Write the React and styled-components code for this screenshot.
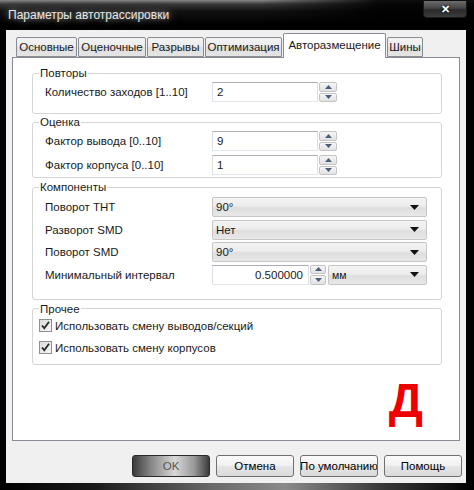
import styled, { createGlobalStyle } from 'styled-components'

const GlobalStyle = createGlobalStyle`
    html, body {
        margin: 0;
        padding: 0;
        background: #000;
    }
    body {
        font-family: "Liberation Sans", Arial, sans-serif;
        font-size: 11.5px;
        color: #1a1a1a;
    }
`

const tabs = [
    { name: 'Основные', w: 61 },
    { name: 'Оценочные', w: 68 },
    { name: 'Разрывы', w: 57 },
    { name: 'Оптимизация', w: 77 },
    { name: 'Авторазмещение', w: 103, active: true },
    { name: 'Шины', w: 36 },
]

function SpinArrows({ $w = 18 }) {
    return (
        <Spin $w={$w}>
            <SpinHalf>
                <svg width="7" height="4" viewBox="0 0 7 4"><path d="M0 4 L3.5 0 L7 4 Z" fill="#4d5d7a" /></svg>
            </SpinHalf>
            <SpinHalf>
                <svg width="7" height="4" viewBox="0 0 7 4"><path d="M0 0 L3.5 4 L7 0 Z" fill="#4d5d7a" /></svg>
            </SpinHalf>
        </Spin>
    )
}

function Combo({ value, $w = 215 }) {
    return (
        <ComboBox $w={$w}>
            <span>{value}</span>
            <svg width="9" height="5" viewBox="0 0 9 5"><path d="M0 0 L9 0 L4.5 5 Z" fill="#111" /></svg>
        </ComboBox>
    )
}

function Check({ label }) {
    return (
        <CheckRow>
            <CheckBox>
                <svg width="11" height="11" viewBox="0 0 11 11">
                    <path d="M2 5.5 L4.3 8.2 L9 1.8" stroke="#2a2a2a" strokeWidth="1.8" fill="none" />
                </svg>
            </CheckBox>
            <span>{label}</span>
        </CheckRow>
    )
}

export default function App() {
    return (
        <>
            <GlobalStyle />
            <Window>
                <TitleBar>
                    <Title>Параметры автотрассировки</Title>
                    <CloseBtn>✕</CloseBtn>
                </TitleBar>
                <Client>
                    <TabStrip>
                        {tabs.map(t => (
                            <Tab key={t.name} $w={t.w} $active={t.active}>{t.name}</Tab>
                        ))}
                    </TabStrip>
                    <Panel>
                        <Group $pb={11}>
                            <Legend>Повторы</Legend>
                            <Row $mt={2}>
                                <Label>Количество заходов [1..10]</Label>
                                <NumInput $w={106}>2</NumInput>
                                <SpinArrows />
                            </Row>
                        </Group>
                        <Group $pb={2} $mt={1}>
                            <Legend>Оценка</Legend>
                            <Rows $gap={4}>
                                <Row $mt={2}>
                                    <Label>Фактор вывода [0..10]</Label>
                                    <NumInput $w={106}>9</NumInput>
                                    <SpinArrows />
                                </Row>
                                <Row>
                                    <Label>Фактор корпуса [0..10]</Label>
                                    <NumInput $w={106}>1</NumInput>
                                    <SpinArrows />
                                </Row>
                            </Rows>
                        </Group>
                        <Group $pb={14} $mt={2}>
                            <Legend>Компоненты</Legend>
                            <Rows $gap={2.5}>
                                <Row $mt={3}>
                                    <Label>Поворот THT</Label>
                                    <Combo value="90°" />
                                </Row>
                                <Row>
                                    <Label>Разворот SMD</Label>
                                    <Combo value="Нет" />
                                </Row>
                                <Row>
                                    <Label>Поворот SMD</Label>
                                    <Combo value="90°" />
                                </Row>
                                <Row>
                                    <Label>Минимальный интервал</Label>
                                    <NumInput $w={97} $right>0.500000</NumInput>
                                    <SpinArrows $w={16} />
                                    <Combo value="мм" $w={99} />
                                </Row>
                            </Rows>
                        </Group>
                        <Group $pb={7} $mt={2}>
                            <Legend>Прочее</Legend>
                            <Rows $gap={4}>
                                <Check label="Использовать смену выводов/секций" />
                                <Check label="Использовать смену корпусов" />
                            </Rows>
                        </Group>
                        <Mark>Д</Mark>
                    </Panel>
                    <Buttons>
                        <Button $default>OK</Button>
                        <Button>Отмена</Button>
                        <Button>По умолчанию</Button>
                        <Button>Помощь</Button>
                    </Buttons>
                </Client>
                <BottomFrame />
            </Window>
        </>
    )
}

const Window = styled.div`
    width: 474px;
    height: 490px;
    display: flex;
    flex-direction: column;
    background: #000;
    overflow: hidden;
`

const TitleBar = styled.div`
    height: 30px;
    flex-shrink: 0;
    display: flex;
    justify-content: space-between;
    background:
        linear-gradient(to right, rgba(0,0,0,0) 0, rgba(0,0,0,0) 55%, rgba(0,0,0,0.9) 80%),
        linear-gradient(to bottom, #8a8a8a 0, #3a3a3a 4px, #121212 11px, #000 24px);
`

const Title = styled.div`
    padding-left: 8px;
    line-height: 30px;
    color: #e6e6e6;
    font-size: 12px;
    text-shadow: 0 0 6px rgba(170, 170, 170, 0.9), 0 0 12px rgba(120, 120, 120, 0.8);
`

const CloseBtn = styled.div`
    width: 42px;
    height: 16px;
    margin: 1px 7px 0 0;
    border: 1px solid #1a1a1a;
    border-top: none;
    border-radius: 0 0 4px 4px;
    background: linear-gradient(to bottom, #6c6c6c 0, #444 45%, #2a2a2a 55%, #3c3c3c 100%);
    color: #fff;
    font-size: 11px;
    font-weight: bold;
    display: flex;
    align-items: center;
    justify-content: center;
    text-shadow: 0 0 3px #000;
`

const Client = styled.div`
    flex: 1;
    margin: 0 8px 0 6px;
    padding: 3px 6px 6px;
    background: #f0f0f0;
    display: flex;
    flex-direction: column;
    min-height: 0;
`

const TabStrip = styled.div`
    height: 24px;
    display: flex;
    align-items: flex-end;
    gap: 1px;
    padding-left: 4px;
    position: relative;
    z-index: 1;
`

const Tab = styled.div`
    box-sizing: border-box;
    width: ${p => p.$w}px;
    height: ${p => (p.$active ? 25 : 20)}px;
    margin-bottom: ${p => (p.$active ? -1 : 0)}px;
    padding-bottom: ${p => (p.$active ? 3 : 0)}px;
    border: 1px solid #898c95;
    border-bottom: ${p => (p.$active ? 'none' : '1px solid #898c95')};
    border-radius: 2px 2px 0 0;
    background: ${p => (p.$active ? '#fff' : 'linear-gradient(to bottom, #f3f3f3 0, #ebebeb 50%, #dedede 51%, #e5e5e5 100%)')};
    display: flex;
    align-items: center;
    justify-content: center;
    white-space: nowrap;
`

const Panel = styled.div`
    height: 384px;
    box-sizing: border-box;
    background: #fff;
    border: 1px solid #898c95;
    padding: 8px 17px 0 19px;
    display: flex;
    flex-direction: column;
`

const Group = styled.fieldset`
    margin: ${p => p.$mt || 0}px 0 0;
    padding: 0 13px ${p => p.$pb}px 6px;
    border: 1px solid #d5d5d5;
    border-radius: 3px;
    min-width: 0;
`

const Legend = styled.legend`
    padding: 0 1px;
    line-height: 14px;
`

const Rows = styled.div`
    display: flex;
    flex-direction: column;
    gap: ${p => p.$gap}px;
`

const Row = styled.div`
    height: 20px;
    margin-top: ${p => p.$mt || 0}px;
    display: flex;
    align-items: center;
`

const Label = styled.div`
    flex: 0 0 173px;
    box-sizing: border-box;
    padding-left: 6px;
    white-space: nowrap;
`

const NumInput = styled.div`
    box-sizing: border-box;
    width: ${p => p.$w}px;
    height: 20px;
    padding: 0 ${p => (p.$right ? 5 : 4)}px;
    border: 1px solid #dbdfe6;
    border-top-color: #abadb3;
    border-bottom-color: #e3e9ef;
    background: #fff;
    display: flex;
    align-items: center;
    justify-content: ${p => (p.$right ? 'flex-end' : 'flex-start')};
`

const Spin = styled.div`
    width: ${p => p.$w}px;
    height: 20px;
    margin-left: 1px;
    display: flex;
    flex-direction: column;
    gap: 1px;
    margin-right: 2px;
`

const SpinHalf = styled.div`
    flex: 1;
    border: 1px solid #c4c4c4;
    border-radius: 2px;
    background: linear-gradient(to bottom, #f6f6f6, #e2e2e2);
    display: flex;
    align-items: center;
    justify-content: center;
`

const ComboBox = styled.div`
    box-sizing: border-box;
    width: ${p => p.$w}px;
    height: 20px;
    padding: 0 7px 0 3px;
    border: 1px solid #c6c6c6;
    border-radius: 2px;
    background: linear-gradient(to bottom, #f4f4f4 0, #ececec 45%, #dedede 55%, #e8e8e8 100%);
    display: flex;
    align-items: center;
    justify-content: space-between;

    span {
        font-size: ${p => (p.$w < 120 ? 10.5 : 11.5)}px;
    }
`

const CheckRow = styled.div`
    height: 18px;
    display: flex;
    align-items: center;
    gap: 3px;
    white-space: nowrap;

    &:first-child {
        margin-top: 1px;
    }
`

const CheckBox = styled.div`
    box-sizing: border-box;
    width: 13px;
    height: 13px;
    border: 1px solid #8e8f8f;
    background: linear-gradient(135deg, #dcdcdc, #f6f6f6);
    display: flex;
    align-items: center;
    justify-content: center;
`

const Mark = styled.div`
    align-self: flex-end;
    margin: 12px 19px 0 0;
    font-size: 48px;
    line-height: 48px;
    font-weight: bold;
    color: #ee0000;
`

const Buttons = styled.div`
    margin: 14px -2px 0 0;
    display: flex;
    justify-content: flex-end;
    gap: 6px;
`

const Button = styled.div`
    box-sizing: border-box;
    width: 78px;
    height: 22px;
    border: 1px solid ${p => (p.$default ? '#2a2a2a' : '#707070')};
    border-radius: 3px;
    background: ${p => (p.$default
        ? 'linear-gradient(to right, #3c3c3c 0, #8a8a8a 25%, #d8d8d8 55%, #9a9a9a 80%, #3c3c3c 100%)'
        : 'linear-gradient(to bottom, #fbfbfb 0, #f0f0f0 50%, #e5e5e5 51%, #dadada 100%)')};
    color: ${p => (p.$default ? '#555' : '#000')};
    display: flex;
    align-items: center;
    justify-content: center;
    white-space: nowrap;
    overflow: hidden;
`

const BottomFrame = styled.div`
    height: 7px;
    flex-shrink: 0;
    background: linear-gradient(to right, #000 0, #1a1a1a 20%, #6a6a6a 45%, #8a8a8a 60%, #3a3a3a 80%, #000 100%);
`
